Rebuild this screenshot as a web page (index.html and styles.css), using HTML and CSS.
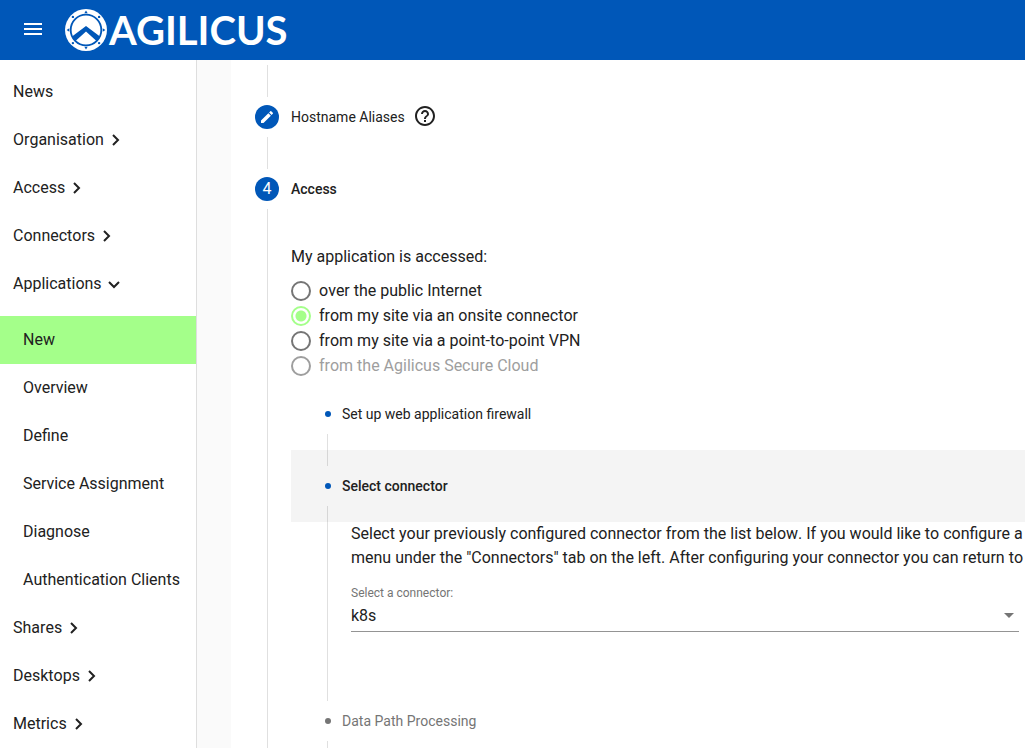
FILE: index.html
```html
<!DOCTYPE html>
<html lang="en">
<head>
  <meta charset="UTF-8">
  <meta name="viewport" content="width=device-width, initial-scale=1.0">
  <title>Agilicus - New Application</title>
  <link rel="stylesheet" href="styles.css">
</head>
<body>
  <header class="toolbar">
    <button class="menu-btn" type="button" aria-label="Menu">
      <svg width="24" height="24" viewBox="0 0 24 24"><path fill="currentColor" d="M3 17h18v-2H3v2zm0-5h18v-2H3v2zm0-7v2h18V5H3z"/></svg>
    </button>
    <a class="logo" href="#">
      <svg width="42" height="42" viewBox="0 0 42 42">
        <circle cx="21" cy="21" r="21" fill="#fff"/>
        <circle cx="21" cy="21" r="15.300" fill="none" stroke="#0057b8" stroke-width="1.800"/>
        <path d="M7 27.500 21 17l14 10.500-3.500 4.500L21 22.500 10.500 32z" fill="#0057b8"/>
        <g fill="#0057b8">
          <path d="M21 1.600l1.700 2.700h-3.400zM21 40.400l1.700-2.700h-3.400zM1.600 21l2.700-1.700v3.400zM40.400 21l-2.700-1.700v3.400z"/>
          <circle cx="7.900" cy="7.900" r="1.200"/>
          <circle cx="34.100" cy="7.900" r="1.200"/>
          <circle cx="7.900" cy="34.100" r="1.200"/>
          <circle cx="34.100" cy="34.100" r="1.200"/>
        </g>
      </svg>
      <span>AGILICUS</span>
    </a>
  </header>

  <div class="layout">
    <nav class="sidebar">
      <a class="nav-item" href="#">News</a>
      <a class="nav-item" href="#">Organisation <svg class="chevron" viewBox="0 0 12 12"><path d="M3 1l5 5-5 5"/></svg></a>
      <a class="nav-item" href="#">Access <svg class="chevron" viewBox="0 0 12 12"><path d="M3 1l5 5-5 5"/></svg></a>
      <a class="nav-item" href="#">Connectors <svg class="chevron" viewBox="0 0 12 12"><path d="M3 1l5 5-5 5"/></svg></a>
      <a class="nav-item open" href="#">Applications <svg class="chevron" viewBox="0 0 12 12"><path d="M1 4l5 5 5-5"/></svg></a>
      <div class="submenu">
        <a class="nav-item active" href="#">New</a>
        <a class="nav-item" href="#">Overview</a>
        <a class="nav-item" href="#">Define</a>
        <a class="nav-item" href="#">Service Assignment</a>
        <a class="nav-item" href="#">Diagnose</a>
        <a class="nav-item" href="#">Authentication Clients</a>
      </div>
      <a class="nav-item" href="#">Shares <svg class="chevron" viewBox="0 0 12 12"><path d="M3 1l5 5-5 5"/></svg></a>
      <a class="nav-item" href="#">Desktops <svg class="chevron" viewBox="0 0 12 12"><path d="M3 1l5 5-5 5"/></svg></a>
      <a class="nav-item" href="#">Metrics <svg class="chevron" viewBox="0 0 12 12"><path d="M3 1l5 5-5 5"/></svg></a>
    </nav>

    <main class="content">
      <div class="step-body"></div>

      <div class="step-header">
        <span class="step-icon">
          <svg width="16" height="16" viewBox="0 0 24 24"><path fill="currentColor" d="M3 17.250V21h3.750L17.810 9.940l-3.750-3.750L3 17.250zM20.710 7.040a1 1 0 0 0 0-1.410l-2.340-2.340a1 1 0 0 0-1.410 0l-1.830 1.830 3.750 3.750 1.830-1.830z"/></svg>
        </span>
        <span class="step-label">Hostname Aliases</span>
        <button class="help-btn" type="button" aria-label="Help">
          <svg width="24" height="24" viewBox="0 0 24 24"><path fill="currentColor" d="M11 17h2v-2h-2v2zm1-16C6.480 1 2 5.480 2 11s4.480 10 10 10 10-4.480 10-10S17.520 1 12 1zm0 18c-4.410 0-8-3.590-8-8s3.590-8 8-8 8 3.590 8 8-3.590 8-8 8zm0-14c-2.210 0-4 1.790-4 4h2c0-1.100.9-2 2-2s2 .9 2 2c0 2-3 1.750-3 5h2c0-2.250 3-2.500 3-5 0-2.210-1.790-4-4-4z"/></svg>
        </button>
      </div>
      <div class="step-body"></div>

      <div class="step-header">
        <span class="step-icon">4</span>
        <span class="step-label selected">Access</span>
      </div>
      <div class="step-body">
        <fieldset class="access-options">
          <legend>My application is accessed:</legend>
          <label class="radio"><input type="radio" name="access"> over the public Internet</label>
          <label class="radio"><input type="radio" name="access" checked> from my site via an onsite connector</label>
          <label class="radio"><input type="radio" name="access"> from my site via a point-to-point VPN</label>
          <label class="radio disabled"><input type="radio" name="access" disabled> from the Agilicus Secure Cloud</label>
        </fieldset>

        <div class="step-header sub">
          <span class="dot"></span>
          <span class="step-label">Set up web application firewall</span>
        </div>
        <div class="step-body"></div>

        <div class="step-header sub current">
          <span class="dot"></span>
          <span class="step-label selected">Select connector</span>
        </div>
        <div class="step-body connector">
          <p>Select your previously configured connector from the list below. If you would like to configure a<br>
          menu under the "Connectors" tab on the left. After configuring your connector you can return to</p>
          <div class="field">
            <label for="connector">Select a connector:</label>
            <div class="select-wrap">
              <select id="connector">
                <option>k8s</option>
              </select>
            </div>
          </div>
        </div>

        <div class="step-header sub pending">
          <span class="dot"></span>
          <span class="step-label">Data Path Processing</span>
        </div>
        <div class="step-body"></div>
      </div>
    </main>
  </div>
</body>
</html>
```
FILE: styles.css
```css
* {
  box-sizing: border-box;
}
body {
  margin: 0;
  height: 100vh;
  display: flex;
  flex-direction: column;
  overflow: hidden;
  font-family: Roboto, "Liberation Sans", sans-serif;
  font-size: 16px;
  font-kerning: none;
  line-height: 24px;
  color: #212121;
  background: #fafafa;
}
button {
  padding: 0;
  border: none;
  background: none;
  color: inherit;
  cursor: pointer;
}
svg {
  display: block;
}

/* toolbar */
.toolbar {
  flex: none;
  display: flex;
  align-items: center;
  gap: 20px;
  height: 60px;
  padding-left: 21px;
  background: #0057b8;
  color: #fff;
}
.menu-btn {
  height: 24px;
}
.logo {
  display: flex;
  align-items: center;
  gap: 2px;
  color: #fff;
  text-decoration: none;
  font-family: Lato, sans-serif;
  font-size: 40px;
  font-weight: bold;
  font-kerning: normal;
  line-height: 42px;
}

/* sidebar */
.layout {
  flex: 1;
  display: flex;
  min-height: 0;
}
.sidebar {
  flex: none;
  width: 197px;
  padding-top: 8px;
  background: #fff;
  border-right: 1px solid #dedede;
  overflow: hidden;
}
.nav-item {
  display: flex;
  align-items: center;
  gap: 6px;
  height: 48px;
  padding-left: 13px;
  color: inherit;
  text-decoration: none;
}
.chevron {
  width: 12px;
  height: 12px;
  fill: none;
  stroke: currentColor;
  stroke-width: 2;
}
.submenu {
  padding-top: 8px;
}
.submenu .nav-item {
  padding-left: 23px;
}
.nav-item.active {
  background: #a4ff8a;
}

/* stepper */
.content {
  flex: 1;
  min-width: 0;
  margin-left: 34px;
  padding-top: 21px;
  background: #fff;
  overflow: hidden;
}
.step-header {
  display: flex;
  align-items: center;
  height: 72px;
  padding: 0 24px;
}
.step-icon {
  display: flex;
  align-items: center;
  justify-content: center;
  width: 24px;
  height: 24px;
  margin-right: 12px;
  border-radius: 50%;
  background: #0057b8;
  color: #fff;
}
.step-label {
  font-size: 14px;
}
.step-label.selected {
  font-weight: 500;
}
.help-btn {
  height: 24px;
  margin-left: 8px;
}
.step-body {
  position: relative;
  margin-left: 36px;
  padding-left: 24px;
}
.step-body::before {
  content: "";
  position: absolute;
  top: -16px;
  bottom: -16px;
  left: 0;
  border-left: 1px solid rgba(0, 0, 0, 0.12);
}

.access-options {
  margin: 0;
  padding: 20px 0 0;
  border: none;
}
.access-options legend {
  float: left;
  width: 100%;
  margin-bottom: 9px;
  padding: 0;
}
.radio {
  clear: both;
  display: flex;
  align-items: center;
  gap: 8px;
  height: 25px;
}
.radio input {
  appearance: none;
  width: 20px;
  height: 20px;
  margin: 0;
  border: 2px solid #757575;
  border-radius: 50%;
}
.radio input:checked {
  border-color: #a4ff8a;
  background: radial-gradient(circle, #a4ff8a 5px, transparent 6px);
}
.radio.disabled {
  color: #9e9e9e;
}
.radio.disabled input {
  border-color: #9e9e9e;
}

/* nested stepper */
.step-header.sub {
  padding-left: 34px;
  gap: 11px;
}
.dot {
  width: 6px;
  height: 6px;
  border-radius: 50%;
  background: #0057b8;
}
.current {
  background: #f4f4f4;
}
.pending {
  color: #757575;
}
.pending .dot {
  background: #757575;
}
.connector {
  padding-right: 6px;
  padding-bottom: 53px;
}
.connector p {
  margin: 0 0 14px;
  white-space: nowrap;
}
.field label {
  display: block;
  font-size: 12px;
  line-height: 18px;
  color: #757575;
}
.select-wrap {
  position: relative;
}
.select-wrap::after {
  content: "";
  position: absolute;
  right: 5px;
  top: 11px;
  border: 5px solid transparent;
  border-top-color: #757575;
  border-bottom: none;
  pointer-events: none;
}
.field select {
  appearance: none;
  display: block;
  width: 100%;
  height: 30px;
  padding: 0 0 2px;
  border: none;
  border-bottom: 1px solid #949494;
  border-radius: 0;
  background: none;
  color: inherit;
  font: inherit;
}
```
